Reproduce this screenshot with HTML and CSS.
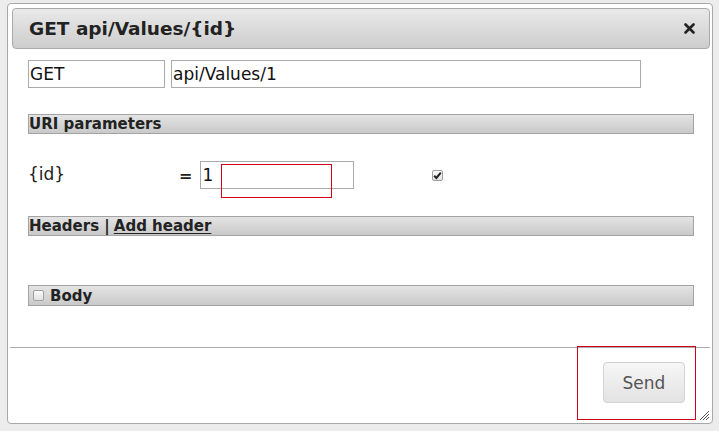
FILE: index.html
```html
<!DOCTYPE html>
<html lang="en">

<head>
    <meta charset="UTF-8">
    <meta name="viewport" content="width=device-width, initial-scale=1.0">
    <title>GET api/Values/{id}</title>
    <link rel="stylesheet" href="styles.css">
</head>

<body>
    <div class="dialog">
        <div class="titlebar">
            <span class="title">GET api/Values/{id}</span>
            <svg class="close" width="11" height="11" viewBox="0 0 11 11">
                <path d="M1.5 1.5 L9.5 9.5 M9.5 1.5 L1.5 9.5" stroke="#222" stroke-width="2.6" stroke-linecap="round" />
            </svg>
        </div>

        <div class="content">
            <div class="request_row">
                <input class="field method" type="text" value="GET">
                <input class="field uri" type="text" value="api/Values/1">
            </div>

            <div class="bar">URI parameters</div>

            <div class="param_row">
                <span class="param_name">{id}</span>
                <span class="equals">=</span>
                <input class="field param_value" type="text" value="1">
                <span class="check checked">
                    <svg width="9" height="9" viewBox="0 0 9 9">
                        <path d="M1.2 4.8 L3.4 7 L7.8 1.6" fill="none" stroke="#222" stroke-width="2" />
                    </svg>
                </span>
            </div>

            <div class="bar">Headers | <u>Add header</u></div>

            <div class="bar body_bar"><span class="check"></span>Body</div>
        </div>

        <div class="footer">
            <button class="send_btn">Send</button>
        </div>

        <svg class="grip" width="11" height="11" viewBox="0 0 11 11">
            <path d="M10 1 L1 10 M10 4 L4 10 M10 7 L7 10" stroke="#555" stroke-width="1" />
        </svg>

        <!-- annotation boxes -->
        <div class="mark mark_param"></div>
        <div class="mark mark_send"></div>
    </div>
</body>

</html>
```

FILE: styles.css
```css
* {
    margin: 0;
    padding: 0;
    box-sizing: border-box;
}

body {
    background: #ececec;
    font-family: "DejaVu Sans", Verdana, sans-serif;
    color: #222;
    height: 431px;
    overflow: hidden;
}

.dialog {
    position: relative;
    margin: 3px 6px 0 7px;
    height: 421px;
    background: white;
    border: 1px solid #a8a8a8;
    border-radius: 4px;
    padding: 4px 2px 0 4px;
    display: flex;
    flex-direction: column;
}

.titlebar {
    height: 41px;
    border: 1px solid #aaa;
    border-radius: 4px;
    background: linear-gradient(#e9e9e9, #cdcdcd);
    display: flex;
    align-items: center;
    justify-content: space-between;
    padding: 0 14px 0 16px;
}

.title {
    font-weight: bold;
    font-size: 18.5px;
    color: #222;
}

.content {
    flex: 1;
    padding: 11px 16px 0 16px;
}

.field {
    height: 28px;
    border: 1px solid #aaa;
    font-family: "DejaVu Sans", Verdana, sans-serif;
    font-size: 17px;
    color: #111;
    padding: 0 1px;
    background: white;
    outline: none;
}

.request_row {
    display: flex;
    gap: 6px;
}

.method {
    width: 137px;
}

.uri {
    width: 470px;
}

.bar {
    margin-top: 26px;
    width: 666px;
    height: 20px;
    border: 1px solid #a3a3a3;
    background: linear-gradient(#e4e4e4, #c9c9c9);
    font-weight: bold;
    font-size: 15px;
    line-height: 18px;
    padding-left: 0;
    color: #222;
    display: flex;
    align-items: center;
    gap: 4px;
}

.bar u {
    text-underline-offset: 2px;
}

.param_row {
    margin-top: 27px;
    height: 28px;
    display: flex;
    align-items: center;
}

.param_name {
    font-size: 17px;
    width: 151px;
    margin-top: -2px;
}

.equals {
    font-weight: bold;
    font-size: 16px;
    margin-right: 8px;
}

.param_value {
    width: 154px;
}

.check {
    width: 11px;
    height: 11px;
    border: 1px solid #a0a0a0;
    border-radius: 2px;
    background: linear-gradient(#fafafa, #e2e2e2);
    display: inline-flex;
    align-items: center;
    justify-content: center;
}

.checked {
    margin-left: 78px;
    margin-top: 1px;
}

.param_row + .bar {
    margin-top: 27px;
}

.body_bar {
    margin-top: 49px;
    height: 21px;
    padding-left: 4px;
    gap: 6px;
}

.footer {
    height: 76px;
    border-top: 1px solid #aaa;
    margin: 0 0 0 -2px;
    display: flex;
    justify-content: flex-end;
    align-items: flex-start;
    padding: 14px 25px 0 0;
}

.send_btn {
    width: 82px;
    height: 41px;
    border: 1px solid #d3d3d3;
    border-radius: 4px;
    background: linear-gradient(#f6f6f6, #e3e3e3);
    font-family: "DejaVu Sans", Verdana, sans-serif;
    font-size: 17px;
    color: #555;
}

.grip {
    position: absolute;
    right: 2px;
    bottom: 2px;
}

.mark {
    position: absolute;
    border: 1px solid #d0001c;
}

.mark_param {
    left: 213px;
    top: 160px;
    width: 111px;
    height: 34px;
}

.mark_send {
    left: 569px;
    top: 342px;
    width: 119px;
    height: 74px;
}
```
